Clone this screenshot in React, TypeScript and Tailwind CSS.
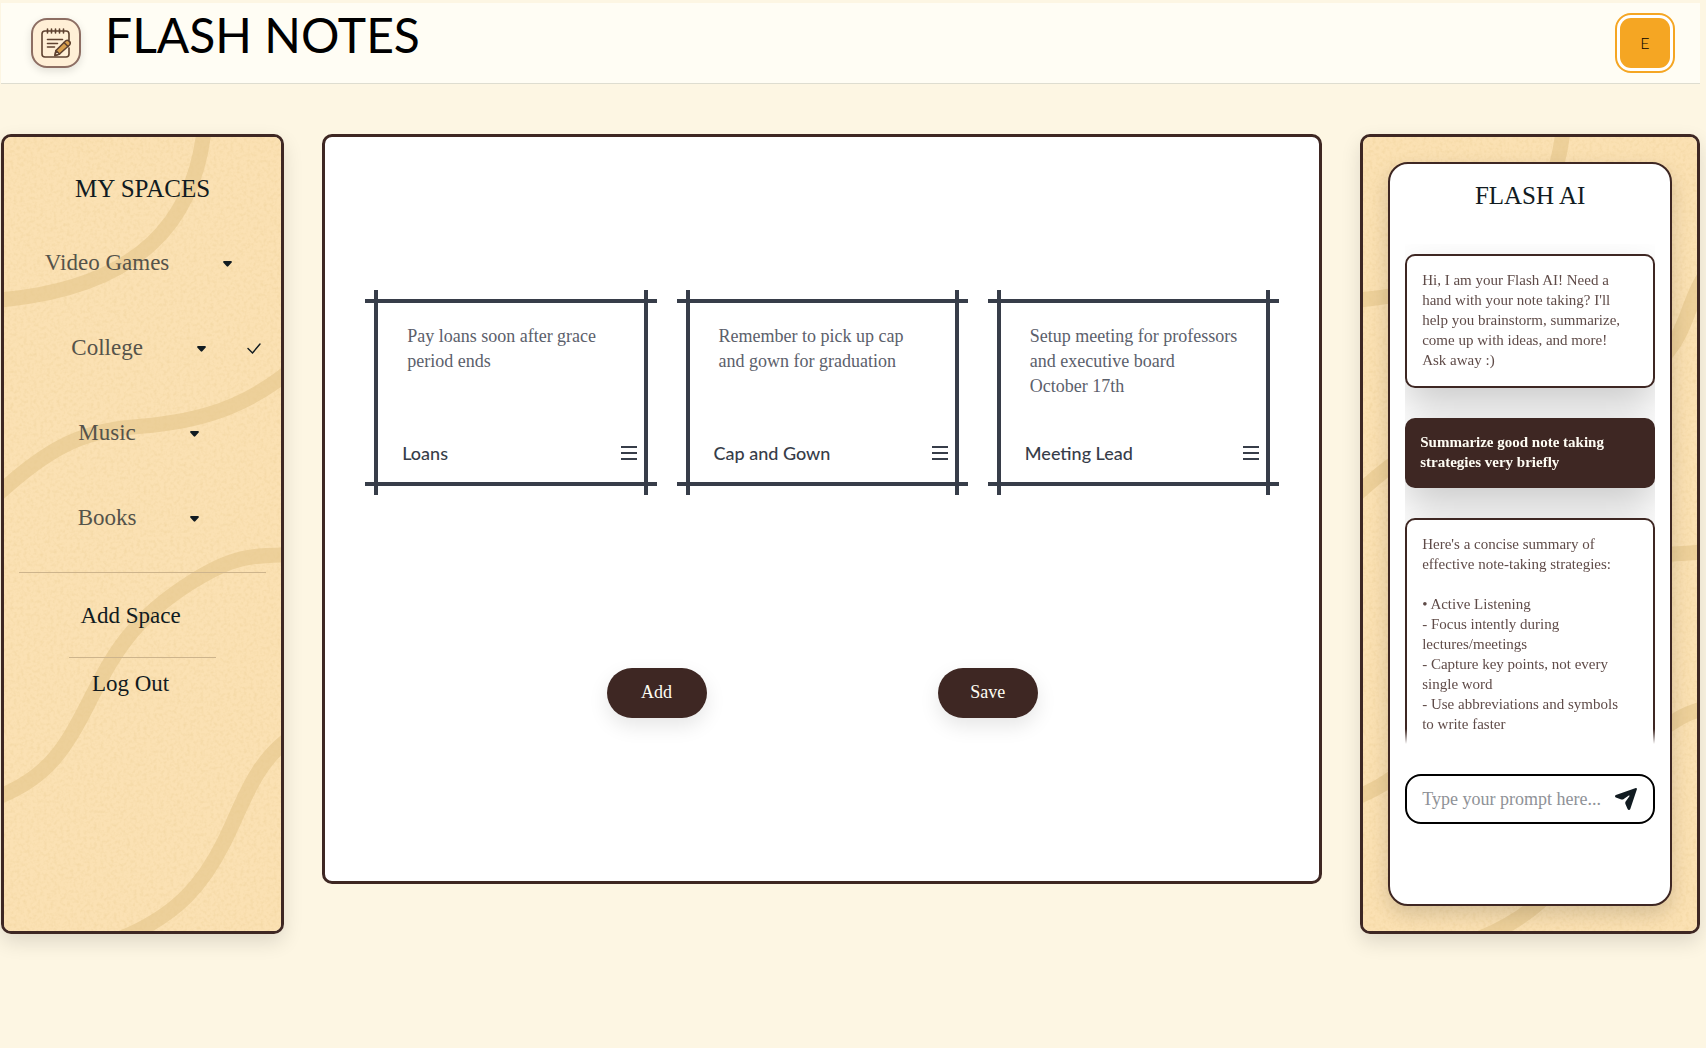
import React, { useState } from "react";

const serif = "font-['Liberation_Serif',serif]";

type Note = { title: string; text: string };

const notes: Note[] = [
  { title: "Loans", text: "Pay loans soon after grace period ends" },
  { title: "Cap and Gown", text: "Remember to pick up cap and gown for graduation" },
  { title: "Meeting Lead", text: "Setup meeting for professors and executive board\nOctober 17th" },
];

const spaces = ["Video Games", "College", "Music", "Books"];

function SandBackground({ id }: { id: string }) {
  return (
    <svg
      className="absolute inset-0 size-full"
      viewBox="0 0 334 794"
      preserveAspectRatio="xMinYMin slice"
      aria-hidden="true"
    >
      <filter id={id} x="0" y="0" width="100%" height="100%">
        <feTurbulence type="fractalNoise" baseFrequency="0.3" numOctaves="2" seed="4" />
        <feColorMatrix values="0 0 0 0 0.8  0 0 0 0 0.58  0 0 0 0 0.26  0.7 0 0 0 -0.29" />
      </filter>
      <rect width="334" height="794" fill="#fbe1b3" />
      <g fill="none" stroke="#edd09a" strokeWidth="15">
        <path d="M200 -6C190 80 140 150 -4 163" />
        <path d="M-6 357C40 315 75 294 129 290S230 276 278 240S320 175 340 142" />
        <path d="M-6 660C45 640 62 610 85 565S125 485 186 446S260 423 340 415" />
        <path d="M115 802C175 778 200 745 220 705S250 625 290 598S325 578 340 571" />
      </g>
      <rect width="334" height="794" filter={`url(#${id})`} />
    </svg>
  );
}

function LogoIcon() {
  return (
    <svg viewBox="0 0 30 32" className="h-8 w-[30px]" fill="none" stroke="#5f4230" strokeWidth="1.6" strokeLinecap="round" strokeLinejoin="round" aria-hidden="true">
      <path d="M28 13V7a3 3 0 0 0-3-3H4a3 3 0 0 0-3 3v20a3 3 0 0 0 3 3h21a3 3 0 0 0 3-3v-6" />
      <path d="M6.500 2v4M10.500 2v4M14.500 2v4M18.500 2v4M22.500 2v4" />
      <path d="M6.500 12.500h15M6.500 16.500h10M6.500 20h7" />
      <path d="M24 14.500a2.500 2.500 0 0 1 4.500 3.500L18.500 27l-4.500 1.500 1-5z" fill="#d9a04e" />
      <path d="M15 23.500l3.500 3.500-4.500 1.500z" fill="#fff0d8" />
      <path d="M23 15.500l4 4" />
    </svg>
  );
}

function Caret() {
  return (
    <svg viewBox="0 0 9 6" className="h-1.5 w-[9px]" fill="#111b21" aria-hidden="true">
      <path d="M1 0h7a1 1 0 0 1 .7 1.600L5.300 5.300a1.100 1.100 0 0 1-1.600 0L.3 1.600A1 1 0 0 1 1 0z" />
    </svg>
  );
}

function SpaceRow({ name, selected, onSelect }: { name: string; selected: boolean; onSelect: () => void }) {
  return (
    <li className="grid h-[85px] grid-cols-[1fr_auto_1fr] items-center pr-2">
      <span />
      <button type="button" onClick={onSelect} className="flex items-center gap-[54px] whitespace-nowrap text-[23px] text-[#55534a]">
        {name}
        <Caret />
      </button>
      {selected && (
        <svg viewBox="0 0 14 11" className="mr-3 h-[11px] w-3.5 justify-self-end" fill="none" stroke="#111b21" strokeWidth="1.400" strokeLinecap="round" aria-label="Selected">
          <path d="M1 5.500L5.500 10L13 1" />
        </svg>
      )}
    </li>
  );
}

function Sidebar() {
  const [selected, setSelected] = useState("College");
  return (
    <aside className="relative h-[800px] w-1/6 shrink-0 overflow-hidden rounded-[10px] border-3 border-[#3e2723] shadow-[0_8px_20px_rgba(0,0,0,0.12)]">
      <SandBackground id="grain-spaces" />
      <div className="relative flex flex-col text-[#111b21]">
        <h2 className="mt-9 text-center text-[25px] leading-8">MY SPACES</h2>
        <ul className="mt-4">
          {spaces.map((s) => (
            <SpaceRow key={s} name={s} selected={s === selected} onSelect={() => setSelected(s)} />
          ))}
        </ul>
        <hr className="mx-[15px] mt-[11px] border-[#cdb48c]" />
        <button type="button" className="mr-6 h-[84px] pt-0.5 text-[23px]">Add Space</button>
        <hr className="mx-auto w-[147px] border-[#cdb48c]" />
        <button type="button" className="mr-6 h-[52px] text-[23px]">Log Out</button>
      </div>
    </aside>
  );
}

function NoteCard({ title, text }: Note) {
  return (
    <article className="relative h-[205px] text-[#373d49]">
      <span className="absolute inset-x-0 top-[9px] h-1 bg-[#373d49]" />
      <span className="absolute inset-x-0 bottom-[9px] h-1 bg-[#373d49]" />
      <span className="absolute inset-y-0 left-[9px] w-1 bg-[#373d49]" />
      <span className="absolute inset-y-0 right-[9px] w-1 bg-[#373d49]" />
      <div className="flex h-full flex-col justify-between pt-[34px] pr-5 pb-7">
        <p className="pl-[42px] pr-5 text-[18px] leading-[25px] whitespace-pre-line text-[#5b606b]">{text}</p>
        <div className="flex items-center justify-between pl-[37px]">
          <h3 className="font-[Lato,sans-serif] text-lg leading-7 font-medium">{title}</h3>
          <button type="button" aria-label={`${title} menu`} className="flex w-4 flex-col gap-1">
            <span className="h-0.5 bg-[#373d49]" />
            <span className="h-0.5 bg-[#373d49]" />
            <span className="h-0.5 bg-[#373d49]" />
          </button>
        </div>
      </div>
    </article>
  );
}

function Board() {
  const action =
    "h-[50px] w-[100px] justify-self-center rounded-full bg-[#3e2723] pb-0.5 text-[18px] text-[#fffdf4] shadow-[0_8px_20px_rgba(0,0,0,0.1)]";
  return (
    <main className="h-[750px] min-w-0 flex-1 rounded-[10px] border-3 border-[#3e2723] bg-white">
      <div className="mt-[153px] grid grid-cols-3 gap-5 px-10">
        {notes.map((n) => (
          <NoteCard key={n.title} {...n} />
        ))}
      </div>
      <div className="mx-auto mt-[173px] grid w-2/3 grid-cols-2">
        <button type="button" className={action}>Add</button>
        <button type="button" className={action}>Save</button>
      </div>
    </main>
  );
}

const reply = `Here's a concise summary of effective note-taking strategies:

• Active Listening
- Focus intently during lectures/meetings
- Capture key points, not every single word
- Use abbreviations and symbols to write faster`;

function Assistant() {
  const box =
    "shrink-0 rounded-[10px] whitespace-pre-line text-[15px] leading-5 shadow-[0_20px_40px_rgba(0,0,0,0.2)]";
  return (
    <aside className="relative h-[800px] w-1/5 shrink-0 overflow-hidden rounded-[10px] border-3 border-[#3e2723] p-[25px] shadow-[0_8px_20px_rgba(0,0,0,0.12)]">
      <SandBackground id="grain-ai" />
      <section className="relative flex h-full flex-col rounded-[20px] border-2 border-[#3e2723] bg-white px-[15px] shadow-[0_8px_20px_rgba(0,0,0,0.15)]">
        <h2 className="mt-4 text-center text-[25px] leading-8 text-[#111b21]">FLASH AI</h2>
        <div className="mt-8 flex h-[500px] flex-col gap-[30px] overflow-hidden pt-2.5 text-[#5f4b48] [mask-image:linear-gradient(to_bottom,#000_97%,transparent)]">
          <div className={`${box} border-2 border-[#3e2723] bg-white pt-3.5 pr-5 pb-4 pl-[15px]`}>
            Hi, I am your Flash AI! Need a hand with your note taking? I'll help you brainstorm, summarize, come up with ideas, and more! Ask away :)
          </div>
          <div className={`${box} bg-[#3e2723] px-[15px] pt-3.5 pb-4 font-bold text-[#fffdf4]`}>
            Summarize good note taking strategies very briefly
          </div>
          <div className={`${box} border-2 border-[#3e2723] bg-white pt-3.5 pr-5 pb-8 pl-[15px]`}>{reply}</div>
        </div>
        <form className="mt-[30px] flex h-[50px] items-center rounded-[16px] border-2 border-black pr-4 pl-[15px]" onSubmit={(e) => e.preventDefault()}>
          <input
            aria-label="Prompt"
            placeholder="Type your prompt here..."
            className="min-w-0 flex-1 text-[18px] text-[#111b21] outline-none placeholder:text-[#8f9297]"
          />
          <button type="submit" aria-label="Send" className="shrink-0">
            <svg viewBox="0 0 22 22" className="size-[22px]" fill="#111b21" aria-hidden="true">
              <path d="M20.800 0.100C21.600-.1 22.100.500 21.900 1.300L15.300 21c-.4 1.300-2.200 1.300-2.700.1L10.300 15.800V14L14.400 8.200c.3-.5-.1-.9-.6-.6L8 11.400H6.300L.9 9.600C-.3 9.200-.3 7.400.9 6.900z" />
            </svg>
          </button>
        </form>
      </section>
    </aside>
  );
}

export default function App() {
  return (
    <div className={`${serif} min-h-screen bg-[#fdf6e3] pt-[3px] pr-1.5 pl-px`}>
      <header className="flex h-[81px] items-center border-b border-[#deddd0] bg-[#fffdf4] pr-[25px] pl-[30px]">
        <div className="flex size-[50px] items-center justify-center rounded-[16px] border-2 border-[#8d6e63] bg-[#ffefd6] shadow-[0_3px_8px_rgba(0,0,0,0.12)]">
          <LogoIcon />
        </div>
        <h1 className="ml-6 pb-4 font-[Lato,sans-serif] text-5xl leading-[60px] text-black">FLASH NOTES</h1>
        <button
          type="button"
          aria-label="Account E"
          className="ml-auto size-[60px] rounded-[16px] border-2 border-[#f5a623] bg-white p-[3px]"
        >
          <span className="flex size-full items-center justify-center rounded-[11px] bg-[#f5a623] font-[Lato,sans-serif] text-base font-light text-black">
            E
          </span>
        </button>
      </header>
      <div className="mt-[50px] flex items-start gap-[38px]">
        <Sidebar />
        <Board />
        <Assistant />
      </div>
    </div>
  );
}
